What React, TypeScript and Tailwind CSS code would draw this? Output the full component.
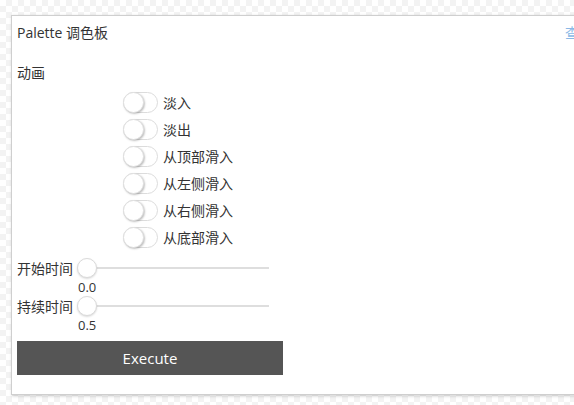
import React from 'react';

const effects = ['淡入', '淡出', '从顶部滑入', '从左侧滑入', '从右侧滑入', '从底部滑入'];

function Toggle() {
  return (
    <span className="relative inline-block h-[21px] w-[35px] rounded-full border border-[#dcdcdc] bg-white">
      <span className="absolute left-[-1px] top-[-1px] h-[21px] w-[21px] rounded-full border border-[#e0e0e0] bg-white shadow-[1px_1px_2px_rgba(0,0,0,0.25)]" />
    </span>
  );
}

function Slider({ label, value }: { label: string; value: string }) {
  return (
    <div className="flex flex-col">
      <div className="flex h-[22px] items-center">
        <span className="w-[60px]">{label}</span>
        <div className="relative flex h-[22px] w-[192px] items-center">
          <div className="ml-[10px] h-[2px] w-[182px] bg-[#dedede]" />
          <span className="absolute left-0 top-[1px] h-[20px] w-[20px] rounded-full border border-[#dadada] bg-white shadow-[0_1px_2px_rgba(0,0,0,0.15)]" />
        </div>
      </div>
      <span className="ml-[61px] text-[13px] leading-[17px]">{value}</span>
    </div>
  );
}

export default function App() {
  return (
    <div
      className="h-[405px] w-[574px] overflow-hidden bg-white bg-[conic-gradient(#f3f3f3_25%,#ffffff_0_50%,#f3f3f3_0_75%,#ffffff_0)] bg-[length:12px_12px] pl-[11px] pt-[15px] text-[14px] text-[#333]"
      style={{ fontFamily: '"Open Sans", "Noto Sans CJK SC", sans-serif' }}
    >
      <div className="flex h-[380px] w-[616px] flex-col border border-[#cfcfcf] bg-white px-[5px] shadow-[1px_1px_3px_rgba(0,0,0,0.2)]">
        <div className="flex h-[32px] items-center">
          <span>Palette 调色板</span>
          <span className="ml-auto text-[#8ab8e6]">查看代码</span>
        </div>
        <div className="mt-[11px] flex h-[26px] items-center">动画</div>
        <div className="ml-[106px] mt-[4px] flex flex-col">
          {effects.map((e) => (
            <div key={e} className="flex h-[27px] items-center gap-[5px]">
              <Toggle />
              <span>{e}</span>
            </div>
          ))}
        </div>
        <div className="mt-[6px] flex flex-col">
          <Slider label="开始时间" value="0.0" />
          <div className="mt-[-1px]">
            <Slider label="持续时间" value="0.5" />
          </div>
        </div>
        <button className="mt-[7px] h-[34px] w-[266px] bg-[#555555] text-[15px] text-white">Execute</button>
      </div>
    </div>
  );
}
